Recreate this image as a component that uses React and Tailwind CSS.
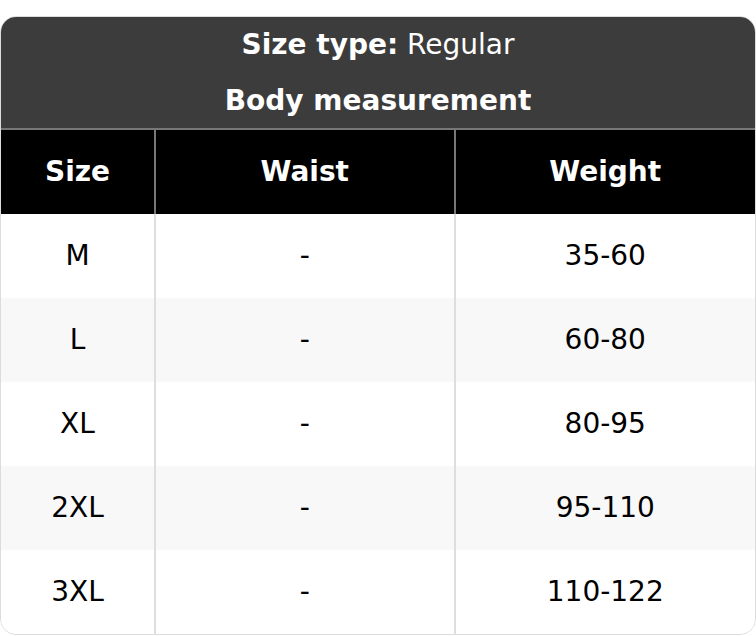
import React from 'react'

const rows = [
  { size: 'M', waist: '-', weight: '35-60' },
  { size: 'L', waist: '-', weight: '60-80' },
  { size: 'XL', waist: '-', weight: '80-95' },
  { size: '2XL', waist: '-', weight: '95-110' },
  { size: '3XL', waist: '-', weight: '110-122' },
]

const App = () => {
  return (
    <div className="w-[756px] h-[636px] bg-white pt-4 font-['DejaVu_Sans',sans-serif]">
      <div className="rounded-2xl overflow-hidden border border-[#dcdcdc] bg-white">
        <div className="bg-[#3c3c3c] text-white text-center text-[28px] border-b-2 border-[#777]">
          <div className="h-14 flex items-center justify-center">
            <span className="font-bold">Size type:</span>&nbsp;Regular
          </div>
          <div className="h-[55px] flex items-center justify-center font-bold">Body measurement</div>
        </div>
        <div className="grid grid-cols-[155px_1fr_1fr] bg-black text-white font-bold text-[28px] h-[84px]">
          <div className="flex items-center justify-center border-r-2 border-[#777]">Size</div>
          <div className="flex items-center justify-center border-r-2 border-[#777]">Waist</div>
          <div className="flex items-center justify-center">Weight</div>
        </div>
        {rows.map((r, i) => (
          <div
            key={r.size}
            className={`grid grid-cols-[155px_1fr_1fr] text-[28px] text-black h-[84px] ${i % 2 === 1 ? 'bg-[#f8f8f8]' : 'bg-white'}`}
          >
            <div className="flex items-center justify-center border-r-2 border-[#dedede]">{r.size}</div>
            <div className="flex items-center justify-center border-r-2 border-[#dedede]">{r.waist}</div>
            <div className="flex items-center justify-center">{r.weight}</div>
          </div>
        ))}
      </div>
    </div>
  )
}

export default App
